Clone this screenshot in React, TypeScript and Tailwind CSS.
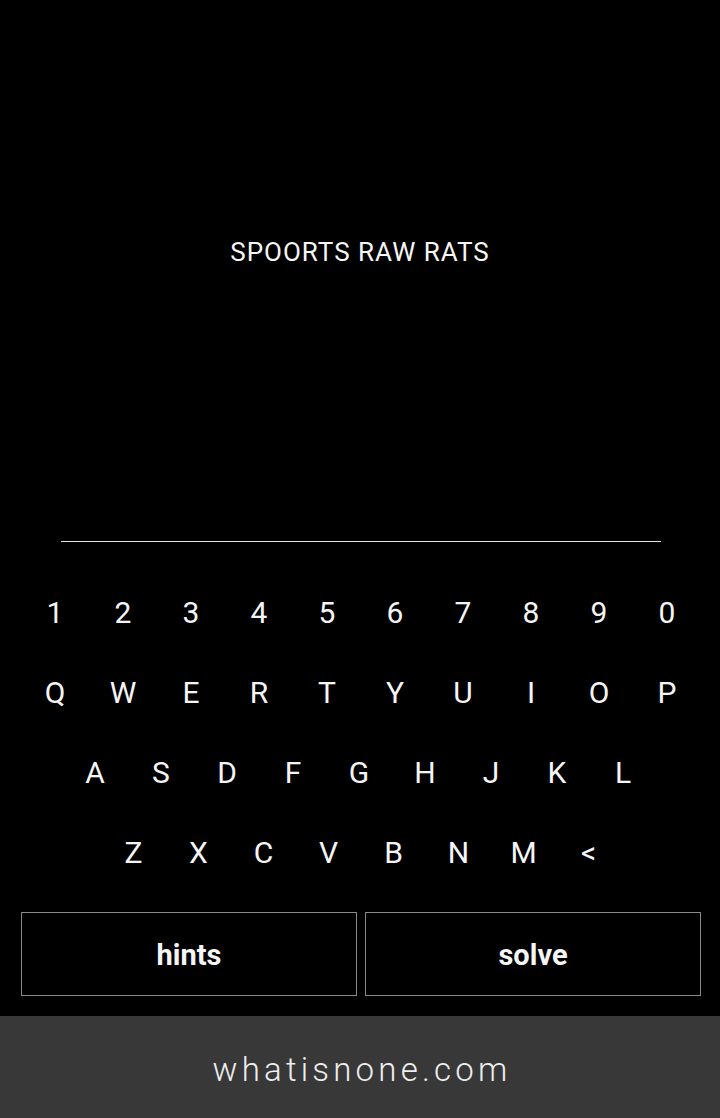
const rows: { keys: string[]; width: string; pad?: string }[] = [
  { keys: ['1', '2', '3', '4', '5', '6', '7', '8', '9', '0'], width: 'w-[68px]', pad: 'pl-[2px]' },
  { keys: ['Q', 'W', 'E', 'R', 'T', 'Y', 'U', 'I', 'O', 'P'], width: 'w-[68px]', pad: 'pl-[2px]' },
  { keys: ['A', 'S', 'D', 'F', 'G', 'H', 'J', 'K', 'L'], width: 'w-[66px]', pad: 'pr-[2px]' },
  { keys: ['Z', 'X', 'C', 'V', 'B', 'N', 'M', '<'], width: 'w-[65px]', pad: 'pl-[2px]' },
];

export default function App() {
  return (
    <div
      className="flex flex-col h-[1118px] w-full bg-black text-white"
      style={{ fontFamily: 'Roboto, "Liberation Sans", sans-serif' }}
    >
      {/* Puzzle */}
      <div className="h-[541px] flex flex-col items-center">
        <div className="mt-[234px] text-[26px] leading-[36px] tracking-[1px] text-[#f5f5f5]">SPOORTS RAW RATS</div>
      </div>
      <div className="ml-[61px] mr-[59px] h-px bg-[#e6e6e6]"></div>

      {/* Keyboard */}
      <div className="mt-[30px] flex flex-col">
        {rows.map((row, i) => (
          <div key={i} className={`flex justify-center h-[80px] items-center ${row.pad ?? ''}`}>
            {row.keys.map((k) => (
              <button
                key={k}
                className={`${row.width} h-[80px] flex items-center justify-center text-[30px] text-[#f5f5f5]`}
              >
                {k}
              </button>
            ))}
          </div>
        ))}
      </div>

      {/* Actions */}
      <div className="mt-[20px] pl-[21px] flex gap-[8px]">
        <button className="w-[336px] h-[84px] pt-[3px] border border-[#8a8a8a] text-[29px] font-bold text-[#f5f5f5]">
          hints
        </button>
        <button className="w-[336px] h-[84px] pt-[3px] border border-[#8a8a8a] text-[29px] font-bold text-[#f5f5f5]">
          solve
        </button>
      </div>

      {/* Footer */}
      <div className="mt-[20px] h-[102px] pt-[6px] pl-[4px] bg-[#383838] flex items-center justify-center">
        <span className="text-[33px] font-light tracking-[4.2px] text-[#eeeeee]">whatisnone.com</span>
      </div>
    </div>
  );
}
